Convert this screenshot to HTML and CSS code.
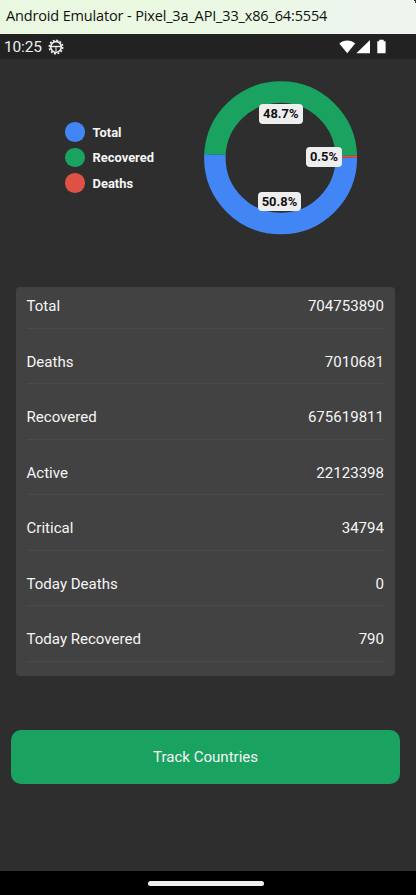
FILE: index.html
```html
<!DOCTYPE html>
<html lang="en">
<head>
<meta charset="utf-8">
<title>World Stats</title>
<link rel="stylesheet" href="styles.css">
</head>
<body>
<header class="window-title"><span>Android Emulator - Pixel_3a_API_33_x86_64:5554</span></header>
<div class="status-bar">
  <span class="clock">10:25</span>
  <svg class="gear" width="16" height="16" viewBox="0 0 16 16">
    <circle cx="8" cy="8" r="6.7" fill="none" stroke="#eee" stroke-width="1.6" stroke-dasharray="2 1.508"/>
    <circle cx="8" cy="8" r="5.3" fill="none" stroke="#eee" stroke-width="1.7"/>
    <path d="M3 7.5H13" stroke="#eee" stroke-width="1.4"/>
    <path d="M8 8V12.5" stroke="#aaa" stroke-width="1.6"/>
  </svg>
  <svg class="signals" width="48" height="16" viewBox="0 0 48 16">
    <path d="M0.3 4.6C4.5 0.6 12 0.6 16.2 4.6L8.2 14.2Z" fill="#fff"/>
    <path d="M31 1V14.2H17.4Z" fill="#fff"/>
    <path d="M38.3 2.2H40.2V0.8H44.7V2.2H46.6V14.2H38.3Z" fill="#fff"/>
  </svg>
</div>
<main class="screen">
  <section class="summary">
    <ul class="legend">
      <li><i class="dot total"></i>Total</li>
      <li><i class="dot recovered"></i>Recovered</li>
      <li><i class="dot deaths"></i>Deaths</li>
    </ul>
    <div class="chart">
      <svg width="154" height="154" viewBox="0 0 154 154" fill="none" stroke-width="21.5">
        <circle cx="76.6" cy="76.8" r="65.75" pathLength="100" stroke="#4285f4" stroke-dasharray="50.8 49.2"/>
        <circle cx="76.6" cy="76.8" r="65.75" pathLength="100" stroke="#1aa260" stroke-dasharray="48.7 51.3" stroke-dashoffset="-50.8"/>
        <circle cx="76.6" cy="76.8" r="65.75" pathLength="100" stroke="#de5246" stroke-dasharray="0.5 99.5" stroke-dashoffset="-99.5"/>
      </svg>
      <span class="tag tag-recovered">48.7%</span>
      <span class="tag tag-deaths">0.5%</span>
      <span class="tag tag-total">50.8%</span>
    </div>
  </section>
  <dl class="card">
    <div class="row"><dt>Total</dt><dd>704753890</dd></div>
    <div class="row"><dt>Deaths</dt><dd>7010681</dd></div>
    <div class="row"><dt>Recovered</dt><dd>675619811</dd></div>
    <div class="row"><dt>Active</dt><dd>22123398</dd></div>
    <div class="row"><dt>Critical</dt><dd>34794</dd></div>
    <div class="row"><dt>Today Deaths</dt><dd>0</dd></div>
    <div class="row"><dt>Today Recovered</dt><dd>790</dd></div>
  </dl>
  <button class="track">Track Countries</button>
</main>
<footer class="nav-bar"><div class="handle"></div></footer>
</body>
</html>
```

FILE: styles.css
```css
* { box-sizing: border-box; margin: 0; padding: 0; }
body {
  width: 416px;
  height: 895px;
  display: flex;
  flex-direction: column;
  overflow: hidden;
  background: #2e2e2e;
  color: #f5f5f5;
  font-family: Roboto, sans-serif;
}
.window-title {
  height: 34px;
  padding: 5px 0 0 6px;
  background:
    linear-gradient(60deg, transparent 65%, #333 66%) top right / 3px 5px no-repeat,
    linear-gradient(90deg, #ebf8e1 0%, #ebf8e3 60%, #edf5ee 85%, #edf5ee 100%);
  color: #111;
  font: 14.5px/21px "Open Sans", sans-serif;
  letter-spacing: -0.15px;
  white-space: nowrap;
}
.status-bar {
  height: 25px;
  display: flex;
  align-items: center;
  padding-left: 4px;
  background: #222;
}
.clock { width: 44px; padding-top: 1px; font-size: 15.5px; line-height: 25px; letter-spacing: -0.15px; color: #eee; }
.signals { margin-left: 275px; }
.screen { flex: 1; display: flex; flex-direction: column; }
.summary { display: flex; height: 227.5px; padding: 22px 0 0 65px; }
.legend { width: 139px; padding-top: 41px; list-style: none; }
.legend li {
  display: flex;
  align-items: center;
  gap: 8px;
  height: 20px;
  margin-bottom: 5.6px;
  font-size: 12.9px;
  font-weight: 700;
}
.dot { width: 19.6px; height: 19.6px; border-radius: 50%; }
.total { background: #4285f4; }
.recovered { background: #1aa260; }
.deaths { background: #de5246; }
.chart { position: relative; width: 154px; height: 154px; }
.chart svg { display: block; }
.tag {
  position: absolute;
  height: 19.6px;
  border-radius: 4px;
  background: #eee;
  color: #111;
  font-size: 12.9px;
  font-weight: 700;
  line-height: 20px;
  text-align: center;
}
.tag-recovered { left: 55px; top: 23px; width: 43.5px; }
.tag-deaths { left: 102px; top: 66.2px; width: 36px; }
.tag-total { left: 53.7px; top: 110.8px; width: 43.5px; }
.card {
  width: 379px;
  height: 389px;
  margin-left: 16px;
  padding: 0 11px 0 10.5px;
  border-radius: 4px;
  background: #424242;
  font-size: 15.05px;
}
.row {
  display: flex;
  justify-content: space-between;
  align-items: flex-end;
  height: 55.5px;
  padding-bottom: 12.4px;
  border-bottom: 1px solid #4a4a4a;
  line-height: 18px;
}
.row:first-child { height: 42px; }
.track {
  width: 388.5px;
  height: 53.5px;
  margin: 54.5px 0 0 11.3px;
  border: 0;
  border-radius: 10px;
  background: #1aa260;
  color: #f5f5f5;
  font: 15.05px Roboto, sans-serif;
}
.nav-bar {
  height: 24px;
  display: flex;
  justify-content: center;
  padding: 10.3px 5px 0 0;
  background: #000;
}
.handle { width: 116px; height: 4.8px; border-radius: 3px; background: #eee; }
```
